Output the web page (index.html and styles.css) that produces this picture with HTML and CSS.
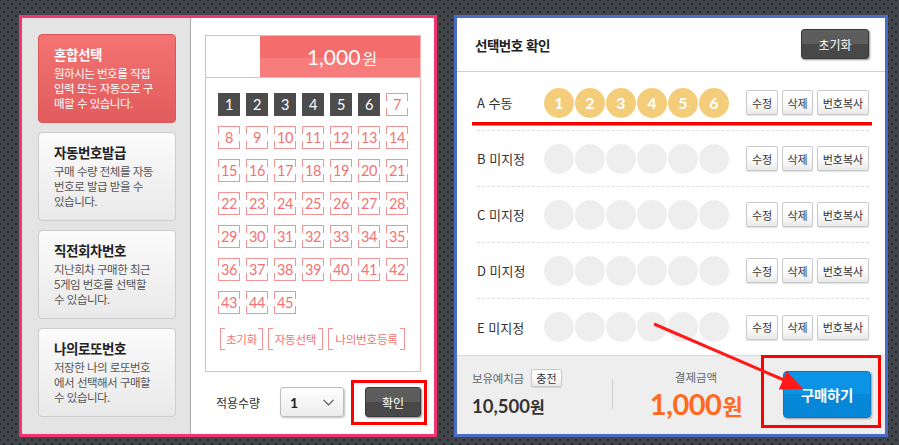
FILE: index.html
```html
<!DOCTYPE html>
<html lang="ko">
<head>
<meta charset="utf-8">
<title>로또 구매</title>
<link rel="stylesheet" href="styles.css">
</head>
<body>
<div class="page">
  <section class="panel-left">
    <aside class="sidebar">
      <div class="card active">
        <h3>혼합선택</h3>
        <p>원하시는 번호를 직접<br>입력 또는 자동으로 구<br>매할 수 있습니다.</p>
      </div>
      <div class="card">
        <h3>자동번호발급</h3>
        <p>구매 수량 전체를 자동<br>번호로 발급 받을 수<br>있습니다.</p>
      </div>
      <div class="card">
        <h3>직전회차번호</h3>
        <p>지난회차 구매한 최근<br>5게임 번호를 선택할<br>수 있습니다.</p>
      </div>
      <div class="card">
        <h3>나의로또번호</h3>
        <p>저장한 나의 로또번호<br>에서 선택해서 구매할<br>수 있습니다.</p>
      </div>
    </aside>
    <div class="picker">
      <div class="numbox">
        <div class="numhead">
          <span class="blank"></span>
          <div class="price">1,000<span class="won">원</span></div>
        </div>
        <div class="grid">
          <span class="cell on">1</span><span class="cell on">2</span><span class="cell on">3</span><span class="cell on">4</span><span class="cell on">5</span><span class="cell on">6</span><span class="cell">7</span>
          <span class="cell">8</span><span class="cell">9</span><span class="cell">10</span><span class="cell">11</span><span class="cell">12</span><span class="cell">13</span><span class="cell">14</span>
          <span class="cell">15</span><span class="cell">16</span><span class="cell">17</span><span class="cell">18</span><span class="cell">19</span><span class="cell">20</span><span class="cell">21</span>
          <span class="cell">22</span><span class="cell">23</span><span class="cell">24</span><span class="cell">25</span><span class="cell">26</span><span class="cell">27</span><span class="cell">28</span>
          <span class="cell">29</span><span class="cell">30</span><span class="cell">31</span><span class="cell">32</span><span class="cell">33</span><span class="cell">34</span><span class="cell">35</span>
          <span class="cell">36</span><span class="cell">37</span><span class="cell">38</span><span class="cell">39</span><span class="cell">40</span><span class="cell">41</span><span class="cell">42</span>
          <span class="cell">43</span><span class="cell">44</span><span class="cell">45</span>
        </div>
        <div class="tools">
          <span class="br br-s">초기화</span>
          <span class="br br-m">자동선택</span>
          <span class="br br-l">나의번호등록</span>
        </div>
      </div>
      <div class="apply">
        <span class="apply-label">적용수량</span>
        <div class="select"><span class="sel-val">1</span>
          <svg class="chev" width="11" height="7" viewBox="0 0 11 7"><path d="M0.5 0.8 L5.5 5.8 L10.5 0.8" fill="none" stroke="#555" stroke-width="1.2"/></svg>
        </div>
        <button class="btn-dark btn-ok">확인</button>
      </div>
    </div>
  </section>

  <section class="panel-right">
    <header class="rhead">
      <h2>선택번호 확인</h2>
      <button class="btn-dark btn-reset">초기화</button>
    </header>
    <div class="rows">
      <div class="row">
        <span class="rlabel">A 수동</span>
        <div class="balls">
          <span class="ball set">1</span><span class="ball set">2</span><span class="ball set">3</span><span class="ball set">4</span><span class="ball set">5</span><span class="ball set">6</span>
        </div>
        <div class="acts"><button class="sbtn w32">수정</button><button class="sbtn w31">삭제</button><button class="sbtn w52">번호복사</button></div>
      </div>
      <div class="row">
        <span class="rlabel">B 미지정</span>
        <div class="balls"><span class="ball"></span><span class="ball"></span><span class="ball"></span><span class="ball"></span><span class="ball"></span><span class="ball"></span></div>
        <div class="acts"><button class="sbtn w32">수정</button><button class="sbtn w31">삭제</button><button class="sbtn w52">번호복사</button></div>
      </div>
      <div class="row">
        <span class="rlabel">C 미지정</span>
        <div class="balls"><span class="ball"></span><span class="ball"></span><span class="ball"></span><span class="ball"></span><span class="ball"></span><span class="ball"></span></div>
        <div class="acts"><button class="sbtn w32">수정</button><button class="sbtn w31">삭제</button><button class="sbtn w52">번호복사</button></div>
      </div>
      <div class="row">
        <span class="rlabel">D 미지정</span>
        <div class="balls"><span class="ball"></span><span class="ball"></span><span class="ball"></span><span class="ball"></span><span class="ball"></span><span class="ball"></span></div>
        <div class="acts"><button class="sbtn w32">수정</button><button class="sbtn w31">삭제</button><button class="sbtn w52">번호복사</button></div>
      </div>
      <div class="row last">
        <span class="rlabel">E 미지정</span>
        <div class="balls"><span class="ball"></span><span class="ball"></span><span class="ball"></span><span class="ball"></span><span class="ball"></span><span class="ball"></span></div>
        <div class="acts"><button class="sbtn w32">수정</button><button class="sbtn w31">삭제</button><button class="sbtn w52">번호복사</button></div>
      </div>
    </div>
    <footer class="rfoot">
      <div class="deposit">
        <div class="dep-line"><span class="dep-label">보유예치금</span><button class="sbtn charge">충전</button></div>
        <div class="dep-amt">10,500<span class="won">원</span></div>
      </div>
      <span class="vdiv"></span>
      <div class="pay">
        <div class="pay-label">결제금액</div>
        <div class="pay-amt">1,000<span class="won">원</span></div>
      </div>
      <button class="buy">구매하기</button>
    </footer>
  </section>
</div>

<svg class="annot" width="899" height="445" viewBox="0 0 899 445">
  <rect x="352.5" y="381.5" width="73" height="42" fill="none" stroke="#ff0000" stroke-width="3"/>
  <rect x="762.5" y="356.5" width="117" height="70" fill="none" stroke="#ff0000" stroke-width="3"/>
  <rect x="472" y="122" width="400" height="3.5" fill="#ff0000"/>
  <line x1="654" y1="324" x2="784" y2="380" stroke="#ff1a1a" stroke-width="3"/>
  <polygon points="803,389 778.8,389.5 786.8,371.1" fill="#ff1a1a"/>
</svg>
</body>
</html>
```

FILE: styles.css
```css
* { box-sizing: border-box; }

html, body {
  margin: 0;
  padding: 0;
}

body {
  width: 899px;
  height: 445px;
  overflow: hidden;
  position: relative;
  font-family: "Noto Sans CJK KR", "Noto Sans", sans-serif;
  background-color: #42454a;
  background-image:
    radial-gradient(circle, #25272a 1px, transparent 1.6px),
    radial-gradient(circle, #25272a 1px, transparent 1.6px);
  background-size: 8px 8px, 8px 8px;
  background-position: 0 0, 4px 4px;
}

button {
  font-family: inherit;
  cursor: pointer;
  padding: 0;
}

.page {
  display: flex;
  align-items: flex-start;
  gap: 17px;
  padding: 15px 0 0 19px;
}

/* ---------- left panel ---------- */
.panel-left {
  width: 418px;
  height: 422px;
  border: 3px solid #f2356f;
  background: #fff;
  display: flex;
}

.sidebar {
  width: 169px;
  height: 100%;
  background: #e4e4e4;
  border-right: 1px solid #a8a8a8;
  padding: 16px 0 0 16px;
  display: flex;
  flex-direction: column;
  gap: 9px;
}

.card {
  width: 138px;
  height: 89px;
  border: 1px solid #cdcdcd;
  border-radius: 4px;
  background: linear-gradient(#fbfbfb, #e9e9e9);
  padding: 10px 0 0 15px;
  white-space: nowrap;
}

.card h3 {
  margin: 0;
  font-size: 13.5px;
  line-height: 18px;
  font-weight: 700;
  color: #222;
  letter-spacing: -0.4px;
}

.card p {
  margin: 3px 0 0;
  font-size: 11.5px;
  line-height: 15px;
  color: #555;
  letter-spacing: -0.5px;
}

.card.active {
  background: linear-gradient(#f47373, #e15c5c);
  border-color: #d65858;
}

.card.active h3,
.card.active p {
  color: #fff;
}

.picker {
  flex: 1;
  padding: 17px 13px 0 14px;
}

.numbox {
  height: 337px;
  border: 1px solid #f5b3b3;
}

.numhead {
  height: 42px;
  border-bottom: 1px solid #f5b3b3;
  display: flex;
}

.blank {
  width: 54px;
}

.price {
  flex: 1;
  background: linear-gradient(#f56c6c 0, #f56c6c 53%, #f77c7c 53%, #f77c7c 100%);
  color: #fff;
  font-family: "Lato", "Noto Sans CJK KR", sans-serif;
  font-weight: 400;
  font-size: 21px;
  line-height: 41px;
  text-align: center;
  padding-left: 4px;
}

.price .won {
  font-family: "Noto Sans CJK KR", sans-serif;
  font-size: 16px;
  font-weight: 400;
  margin-left: 2px;
}

.grid {
  display: grid;
  grid-template-columns: repeat(7, 22px);
  grid-auto-rows: 23px;
  column-gap: 6px;
  row-gap: 10px;
  padding: 15px 0 0 12px;
}

.cell {
  --c: #f39393;
  display: block;
  width: 22px;
  height: 23px;
  border-top: 1px solid var(--c);
  border-bottom: 1px solid var(--c);
  background:
    linear-gradient(var(--c), var(--c)) left top / 1px 7px no-repeat,
    linear-gradient(var(--c), var(--c)) right top / 1px 7px no-repeat,
    linear-gradient(var(--c), var(--c)) left bottom / 1px 7px no-repeat,
    linear-gradient(var(--c), var(--c)) right bottom / 1px 7px no-repeat;
  font-family: "Lato", sans-serif;
  font-size: 14.5px;
  line-height: 21px;
  text-align: center;
  color: #f27474;
  letter-spacing: -0.3px;
}

.cell.on {
  background: #4c4c4c;
  border-color: #4c4c4c;
  color: #fff;
}

.tools {
  display: flex;
  gap: 5px;
  padding: 14px 0 0 14px;
}

.br {
  --c: #f39393;
  height: 22px;
  border-left: 1px solid var(--c);
  border-right: 1px solid var(--c);
  background:
    linear-gradient(var(--c), var(--c)) left top / 4px 1px no-repeat,
    linear-gradient(var(--c), var(--c)) right top / 4px 1px no-repeat,
    linear-gradient(var(--c), var(--c)) left bottom / 4px 1px no-repeat,
    linear-gradient(var(--c), var(--c)) right bottom / 4px 1px no-repeat;
  font-size: 11.5px;
  line-height: 22px;
  color: #f27474;
  white-space: nowrap;
  text-align: center;
  letter-spacing: -0.2px;
}

.br-s { width: 43px; }
.br-m { width: 55px; }
.br-l { width: 77px; }

.apply {
  display: flex;
  align-items: center;
  height: 30px;
  margin-top: 15px;
  padding-left: 11px;
}

.apply-label {
  width: 64px;
  font-size: 12px;
  color: #333;
}

.select {
  width: 64px;
  height: 30px;
  border: 1px solid #bdbdbd;
  border-radius: 3px;
  background: linear-gradient(#ffffff, #ececec);
  box-shadow: 1px 1px 2px rgba(0, 0, 0, 0.25);
  display: flex;
  align-items: center;
  padding: 0 9px 0 9px;
}

.sel-val {
  font-family: "Lato", sans-serif;
  font-weight: 700;
  font-size: 14px;
  color: #222;
}

.chev {
  margin-left: auto;
}

.btn-dark {
  border: 1px solid #3a3a3a;
  border-radius: 3px;
  background: linear-gradient(#5d5d5d 0, #5d5d5d 50%, #484848 50%, #484848 100%);
  color: #fff;
  box-shadow: 1px 1px 2px rgba(0, 0, 0, 0.45);
  font-size: 12px;
}

.btn-ok {
  width: 56px;
  height: 30px;
  margin-left: 21px;
}

/* ---------- right panel ---------- */
.panel-right {
  width: 434px;
  height: 422px;
  border: 3px solid #4a6cc6;
  background: #fff;
  display: flex;
  flex-direction: column;
}

.rhead {
  height: 54px;
  border-bottom: 1px solid #cfcfcf;
  display: flex;
  align-items: center;
  justify-content: space-between;
  padding: 0 16px 0 18px;
  flex-shrink: 0;
}

.rhead h2 {
  margin: 0;
  font-size: 13.5px;
  font-weight: 700;
  color: #222;
  letter-spacing: -0.5px;
}

.btn-reset {
  width: 68px;
  height: 30px;
  margin-top: -1px;
}

.rows {
  margin: 3px 16px 0 20px;
}

.row {
  height: 56px;
  border-bottom: 1px dashed #dedede;
  display: flex;
  align-items: center;
}

.row.last {
  border-bottom: none;
}

.rlabel {
  width: 67px;
  font-size: 13px;
  color: #333;
  white-space: nowrap;
}

.balls {
  display: flex;
  gap: 1px;
}

.ball {
  width: 30px;
  height: 30px;
  border-radius: 50%;
  background: #eeeeee;
  color: #fff;
  font-family: "Lato", sans-serif;
  font-weight: 700;
  font-size: 16px;
  line-height: 30px;
  text-align: center;
}

.ball.set {
  background: #f4cd7a;
}

.acts {
  margin-left: auto;
  display: flex;
  gap: 4px;
}

.sbtn {
  height: 25px;
  border: 1px solid #c9c9c9;
  border-radius: 2px;
  background: linear-gradient(#ffffff 0, #ffffff 45%, #e9e9e9 100%);
  box-shadow: 0 1px 1px rgba(0, 0, 0, 0.12);
  font-size: 11px;
  color: #333;
  white-space: nowrap;
}

.w32 { width: 32px; }
.w31 { width: 31px; }
.w52 { width: 52px; }

.rfoot {
  margin-top: auto;
  height: 79px;
  border-top: 1px solid #dadada;
  background: #eeeeee;
  display: flex;
  align-items: flex-start;
  padding-left: 15px;
}

.deposit {
  width: 140px;
  padding-top: 13px;
}

.dep-line {
  display: flex;
  align-items: center;
  height: 18px;
}

.dep-label {
  font-size: 11.5px;
  color: #666;
  letter-spacing: -0.2px;
}

.charge {
  width: 31px;
  height: 18px;
  margin-left: 7px;
  font-size: 11px;
  border-radius: 2px;
}

.dep-amt {
  margin-top: 8px;
  font-family: "Lato", "Noto Sans CJK KR", sans-serif;
  font-weight: 700;
  font-size: 18.5px;
  line-height: 22px;
  color: #333;
}

.dep-amt .won {
  font-family: "Noto Sans CJK KR", sans-serif;
  font-size: 16px;
}

.vdiv {
  width: 1px;
  height: 30px;
  margin-top: 23px;
  background: #d0d0d0;
}

.pay {
  width: 166px;
  padding-top: 13px;
  text-align: center;
}

.pay-label {
  font-size: 11.5px;
  line-height: 16px;
  color: #666;
}

.pay-amt {
  margin-top: 4px;
  font-family: "Lato", "Noto Sans CJK KR", sans-serif;
  font-weight: 700;
  font-size: 29px;
  line-height: 30px;
  color: #ff6a1e;
  letter-spacing: -0.5px;
}

.pay-amt .won {
  font-family: "Noto Sans CJK KR", sans-serif;
  font-size: 22px;
  margin-left: 1px;
}

.buy {
  width: 88px;
  height: 47px;
  margin: 15px 0 0 4px;
  border: 1px solid #0878c4;
  border-radius: 4px;
  background: linear-gradient(#0b93e5 0, #0b93e5 50%, #0787d8 50%, #0787d8 100%);
  box-shadow: 1px 1px 2px rgba(0, 0, 0, 0.35);
  color: #fff;
  font-weight: 700;
  font-size: 14.5px;
  letter-spacing: -0.3px;
}

/* ---------- annotation overlay ---------- */
.annot {
  position: absolute;
  left: 0;
  top: 0;
  pointer-events: none;
}
```
